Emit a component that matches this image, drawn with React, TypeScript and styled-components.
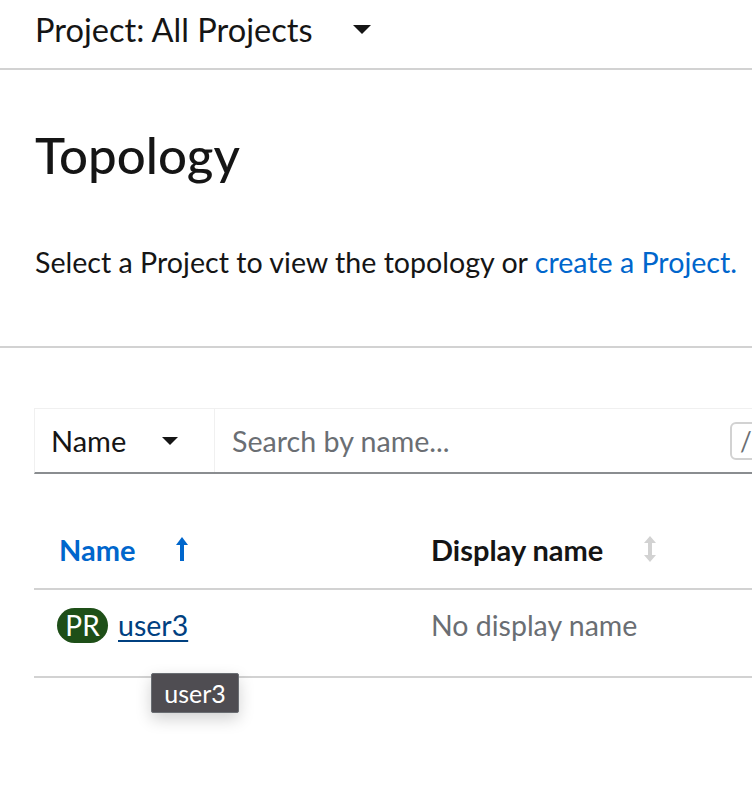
import React from "react";
import styled, { createGlobalStyle } from "styled-components";

const Global = createGlobalStyle`
  html, body { margin: 0; padding: 0; background: #fff; }
  body { font-family: Lato, "Liberation Sans", sans-serif; color: #151515; overflow: hidden; }
  * { box-sizing: border-box; }
`;

const Page = styled.div`
  width: 752px;
  height: 792px;
  position: relative;
  overflow: hidden;
`;

const TopBar = styled.div`
  height: 70px;
  display: flex;
  align-items: center;
  padding: 0 0 10px 35px;
  border-bottom: 2px solid #d2d2d2;
`;

const ProjectToggle = styled.div`
  display: flex;
  align-items: center;
  gap: 40px;
  font-size: 32.6px;
  color: #151515;
`;

const Caret = styled.span<{ $size?: number }>`
  display: inline-block;
  width: 0;
  height: 0;
  border-left: ${(p) => p.$size ?? 9}px solid transparent;
  border-right: ${(p) => p.$size ?? 9}px solid transparent;
  border-top: ${(p) => p.$size ?? 9}px solid #151515;
`;

const Header = styled.section`
  padding: 55px 0 0 35px;
  height: 278px;
  border-bottom: 2px solid #d2d2d2;
`;

const Title = styled.h1`
  margin: 0;
  font-size: 51px;
  font-weight: 500;
  line-height: 60px;
`;

const Subtitle = styled.p`
  margin: 59px 0 0;
  font-size: 28.6px;
  line-height: 36px;
  white-space: nowrap;
`;

const Link = styled.a`
  color: #0066cc;
  text-decoration: none;
`;

const Content = styled.section`
  padding: 60px 0 0 34px;
`;

const Toolbar = styled.div`
  display: flex;
  height: 66px;
  border-top: 1px solid #f0f0f0;
  border-left: 1px solid #f0f0f0;
  border-bottom: 2px solid #8a8d90;
`;

const FilterSelect = styled.div`
  width: 180px;
  display: flex;
  align-items: center;
  justify-content: space-between;
  padding: 0 36px 0 16px;
  border-right: 1px solid #f0f0f0;
  font-size: 29px;
`;

const Search = styled.div`
  flex: 1;
  display: flex;
  align-items: center;
  justify-content: space-between;
  padding-left: 17px;
  font-size: 28.6px;
  color: #6a6e73;
`;

const Kbd = styled.span`
  width: 40px;
  height: 38px;
  border: 2px solid #d2d2d2;
  border-radius: 6px;
  display: flex;
  align-items: center;
  padding-left: 8px;
  margin-right: -18px;
  color: #6a6e73;
  font-size: 26px;
`;

const Table = styled.div``;

const Row = styled.div<{ $head?: boolean }>`
  display: grid;
  grid-template-columns: 397px 1fr;
  align-items: center;
  height: ${(p) => (p.$head ? "116px" : "88px")};
  padding-top: ${(p) => (p.$head ? "36px" : "0")};
  padding-bottom: ${(p) => (p.$head ? "0" : "16px")};
  border-bottom: 2px solid #d2d2d2;
`;

const HeadCell = styled.div<{ $active?: boolean; $pad?: number }>`
  display: flex;
  align-items: center;
  padding-left: ${(p) => p.$pad ?? 0}px;
  font-size: 29px;
  font-weight: 700;
  color: ${(p) => (p.$active ? "#0066cc" : "#151515")};
`;

const SortIcon = styled.span<{ $gap: number }>`
  display: inline-flex;
  margin-left: ${(p) => p.$gap}px;
`;

const Cell = styled.div<{ $pad?: number; $muted?: boolean }>`
  display: flex;
  align-items: center;
  gap: 10px;
  padding-left: ${(p) => p.$pad ?? 0}px;
  font-size: 28.5px;
  color: ${(p) => (p.$muted ? "#6a6e73" : "#151515")};
`;

const Badge = styled.span`
  height: 35px;
  width: 51px;
  border-radius: 18px;
  background: #1e4f18;
  color: #fff;
  font-size: 28px;
  display: inline-flex;
  align-items: center;
  justify-content: center;
  line-height: 1;
`;

const RowLink = styled.a`
  color: #004080;
  text-decoration: underline;
  text-underline-offset: 4px;
  text-decoration-thickness: 2px;
`;

const Tooltip = styled.div`
  position: absolute;
  left: 151px;
  top: 673px;
  width: 88px;
  height: 40px;
  background: #4f4d52;
  border: 1px solid #6a6e73;
  border-radius: 2px;
  color: #fff;
  font-size: 25px;
  display: flex;
  align-items: center;
  justify-content: center;
  box-shadow: 0 6px 16px rgba(3, 3, 3, 0.18);
`;

export default function App() {
  return (
    <Page>
      <Global />
      <TopBar>
        <ProjectToggle>
          <span>Project: All Projects</span>
          <Caret />
        </ProjectToggle>
      </TopBar>
      <Header>
        <Title>Topology</Title>
        <Subtitle>
          Select a Project to view the topology or <Link href="#">create a Project.</Link>
        </Subtitle>
      </Header>
      <Content>
        <Toolbar>
          <FilterSelect>
            <span>Name</span>
            <Caret $size={8} />
          </FilterSelect>
          <Search>
            <span>Search by name...</span>
            <Kbd>/</Kbd>
          </Search>
        </Toolbar>
        <Table>
          <Row $head>
            <HeadCell $active $pad={25}>
              Name
              <SortIcon $gap={40}>
                <svg width="14" height="26" viewBox="0 0 14 26">
                  <path d="M7 1 L13 9 H9 V25 H5 V9 H1 Z" fill="#0066cc" />
                </svg>
              </SortIcon>
            </HeadCell>
            <HeadCell>
              Display name
              <SortIcon $gap={40}>
                <svg width="14" height="28" viewBox="0 0 14 28">
                  <path d="M7 1 L13 8 H9 V20 H13 L7 27 L1 20 H5 V8 H1 Z" fill="#d2d2d2" />
                </svg>
              </SortIcon>
            </HeadCell>
          </Row>
          <Row>
            <Cell $pad={23}>
              <Badge>PR</Badge>
              <RowLink href="#">user3</RowLink>
            </Cell>
            <Cell $muted>No display name</Cell>
          </Row>
        </Table>
      </Content>
      <Tooltip>user3</Tooltip>
    </Page>
  );
}
